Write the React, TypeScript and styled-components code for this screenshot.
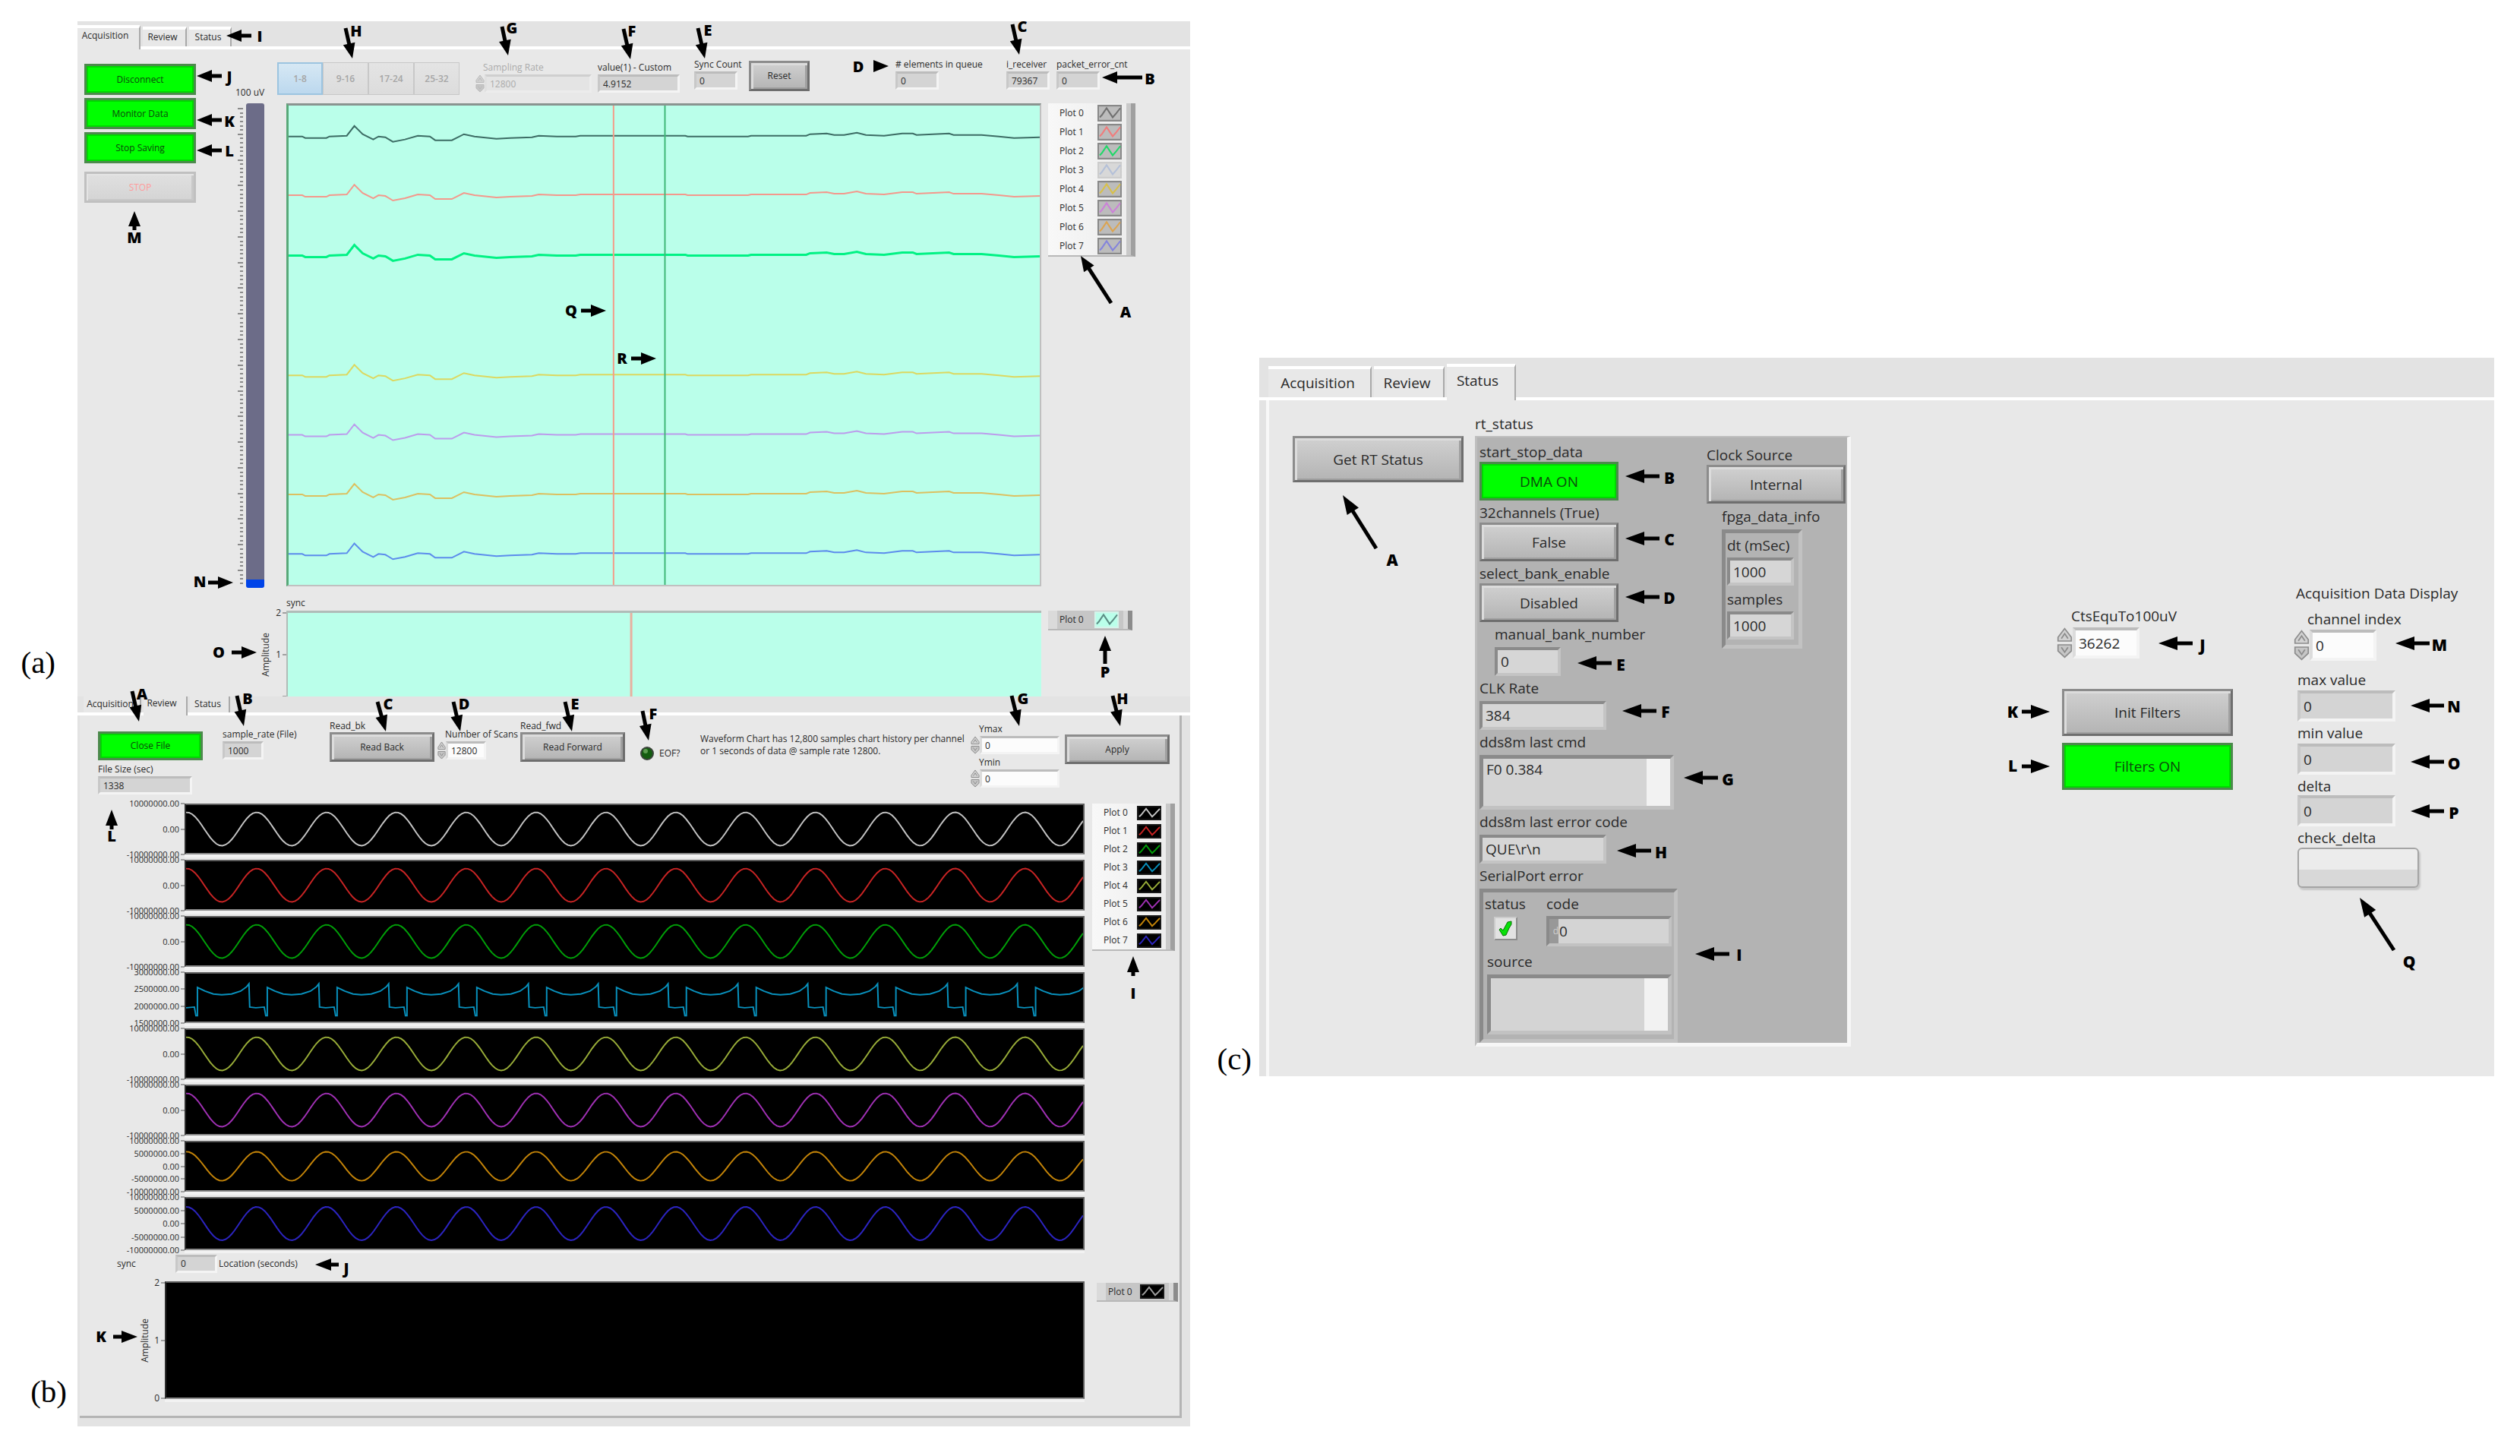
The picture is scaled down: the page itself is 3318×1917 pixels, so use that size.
import React, { useId } from "react";
import styled, { createGlobalStyle, css } from "styled-components";

const GlobalStyle = createGlobalStyle`
  *, *::before, *::after { box-sizing: border-box; }
  body { margin: 0; background: #ffffff; color: #2a2a2a; font-family: "Open Sans", "Noto Sans", sans-serif; }
  button, input, textarea { font: inherit; color: inherit; margin: 0; }
`;

/* ---------- figure layout ---------- */

const Page = styled.main`
  display: grid;
  grid-template-columns: minmax(0, 1567fr) minmax(0, 1717fr);
  padding: 28px 34px 28px 0;
`;

const LeftFigures = styled.div`
  display: grid;
  grid-template-columns: 102px minmax(0, 1fr);
  align-content: start;
`;

const SideFigure = styled.div`
  display: grid;
  grid-template-columns: 91px minmax(0, 1fr);
  align-self: start;
  padding-top: 443px;
`;

const Caption = styled.p<{ $right: number; $bottom: number }>`
  margin: 0;
  align-self: end;
  text-align: right;
  padding-right: ${(p) => p.$right}px;
  padding-bottom: ${(p) => p.$bottom}px;
  font-family: "Liberation Serif", serif;
  font-size: 41px;
  line-height: 44px;
  color: #000000;
`;

const Panel = styled.section<{ $size: number }>`
  position: relative;
  display: flex;
  flex-direction: column;
  min-width: 0;
  background: #e3e3e3;
  font-size: ${(p) => p.$size}px;
  line-height: ${(p) => (p.$size > 14 ? 24 : 16)}px;
`;

/* ---------- tabs ---------- */

const TabStrip = styled.div<{ $height: number; $indent: number }>`
  display: flex;
  align-items: flex-end;
  gap: 3px;
  height: ${(p) => p.$height}px;
  padding-left: ${(p) => p.$indent}px;
  border-bottom: 4px solid #ffffff;
  flex: none;
`;

const Tab = styled.button<{ $active?: boolean; $width: number; $height: number; $flat?: boolean }>`
  width: ${(p) => p.$width}px;
  height: ${(p) => p.$height}px;
  padding: 0 4px 2px 0;
  border: 0;
  border-top: ${(p) => (p.$flat ? 0 : 4)}px solid #ffffff;
  border-right: 2px solid #a9a9a9;
  background: #e8e8e8;
  text-align: center;
  white-space: nowrap;
  ${(p) =>
    p.$active &&
    css`
      margin-bottom: -4px;
      padding: 0 8px 8px 0;
    `}
`;

/* ---------- controls ---------- */

type Tone = "green" | "grey" | "disabled";

const tones: Record<Tone, ReturnType<typeof css>> = {
  green: css`
    background: #00ff00;
    border-color: #4c8a4c;
    box-shadow: inset 0 0 0 2px #00d800;
    color: #0c4a0c;
  `,
  grey: css`
    background: linear-gradient(#d0d0d0, #b4b4b4);
    border-color: #8c8c8c #6e6e6e #6e6e6e #8c8c8c;
    box-shadow: inset 3px 3px 0 #dcdcdc, inset -3px -2px 0 #a0a0a0;
    color: #2a2a2a;
  `,
  disabled: css`
    background: linear-gradient(#e0e0e0, #d4d4d4);
    border-color: #c0c0c0;
    box-shadow: inset 2px 2px 0 #e4e4e4, inset -3px -2px 0 #c8c8c8;
    color: #ff9c9c;
  `,
};

const PushButton = styled.button<{ $tone: Tone; $width: number; $height: number }>`
  width: ${(p) => p.$width}px;
  height: ${(p) => p.$height}px;
  padding: 0;
  border: 3px solid;
  white-space: nowrap;
  ${(p) => tones[p.$tone]}
`;

const CheckDelta = styled.button`
  width: 160px;
  height: 53px;
  border: 2px solid #a4a4a4;
  border-radius: 6px;
  background: linear-gradient(#ececec 55%, #d8d8d8 56%);
  box-shadow: 2px 3px 2px #c8c8c8;
`;

const FieldBox = styled.div<{ $gap: number; $indent: number; $faint: boolean }>`
  display: flex;
  flex-direction: column;
  align-items: flex-start;
  gap: ${(p) => p.$gap}px;
  label {
    white-space: nowrap;
    padding-left: ${(p) => p.$indent}px;
    ${(p) => p.$faint && "color: #ababab;"}
  }
`;

const FieldRow = styled.div<{ $width: number }>`
  display: flex;
  width: ${(p) => p.$width}px;
`;

type BoxLook = "indicator" | "control" | "disabled" | "sunken";

const looks: Record<BoxLook, ReturnType<typeof css>> = {
  indicator: css`
    background: #d4d4d4;
    border-color: #bcbcbc #f4f4f4 #f4f4f4 #c8c8c8;
  `,
  control: css`
    background: #fcfcfc;
    border-color: #bcbcbc #f4f4f4 #f4f4f4 #dcdcdc;
  `,
  disabled: css`
    background: #e4e4e4;
    border-color: #cfcfcf #ececec #ececec #e0e0e0;
    color: #ababab;
  `,
  sunken: css`
    background: #d6d6d6;
    border-color: #8a8a8a #c4c4c4 #c4c4c4 #8a8a8a;
  `,
};

const ValueBox = styled.input<{ $look: BoxLook; $height: number }>`
  flex: 1;
  min-width: 0;
  height: ${(p) => p.$height}px;
  padding: 0 0 0 4px;
  border: ${(p) => (p.$height > 30 ? 4 : 3)}px solid;
  border-radius: 0;
  ${(p) => looks[p.$look]}
`;

const SpinIcon = styled.svg<{ $width: number; $height: number }>`
  flex: none;
  width: ${(p) => p.$width}px;
  height: ${(p) => p.$height}px;
`;

function Spinner({ width, height, faint }: { width: number; height: number; faint?: boolean }) {
  const stroke = faint ? "#b8b8b8" : "#8c8c8c";
  return (
    <SpinIcon $width={width} $height={height} viewBox="0 0 12 25" preserveAspectRatio="none" aria-hidden="true">
      <path d="M6 1 L11 8 V11 H1 V8 Z" fill="#d2d2d2" stroke={stroke} strokeWidth="1" />
      <path d="M3.500 9 L6 5 L8.500 9" fill="none" stroke={stroke} strokeWidth="1" />
      <path d="M1 14 H11 V19 L6 24 L1 19 Z" fill="#c6c6c6" stroke={stroke} strokeWidth="1" />
      <path d="M3.500 16 L6 20 L8.500 16" fill="none" stroke={stroke} strokeWidth="1" />
    </SpinIcon>
  );
}

interface FieldProps {
  label: string;
  value: string;
  width: number;
  height?: number;
  look?: BoxLook;
  gap?: number;
  spin?: number;
  indent?: number;
}

function Field({ label, value, width, height = 24, look = "indicator", gap = 1, spin = 0, indent = 0 }: FieldProps) {
  const id = useId();
  return (
    <FieldBox $gap={gap} $indent={indent} $faint={look === "disabled"}>
      <label htmlFor={id}>{label}</label>
      <FieldRow $width={width}>
        {spin > 0 && <Spinner width={spin} height={height} faint={look === "disabled"} />}
        <ValueBox id={id} $look={look} $height={height} defaultValue={value} readOnly={look !== "control"} />
      </FieldRow>
    </FieldBox>
  );
}

const Cell = styled.div<{ $top?: number }>`
  display: flex;
  flex-direction: column;
  align-items: flex-start;
  gap: 4px;
  padding-top: ${(p) => p.$top ?? 0}px;
  white-space: nowrap;
  min-width: 0;
`;

const Stack = styled.div<{ $gap: number; $top?: number; $left?: number }>`
  display: flex;
  flex-direction: column;
  align-items: flex-start;
  gap: ${(p) => p.$gap}px;
  padding: ${(p) => p.$top ?? 0}px 0 0 ${(p) => p.$left ?? 0}px;
  white-space: nowrap;
`;

function Labelled({ id, label, gap, children }: { id: string; label: string; gap: number; children: React.ReactNode }) {
  return (
    <Stack $gap={gap}>
      <label htmlFor={id}>{label}</label>
      {children}
    </Stack>
  );
}

/* ---------- plot legends ---------- */

const LegendList = styled.ul<{ $row: number; $swatchHeight: number; $width: number }>`
  list-style: none;
  margin: 0;
  padding: 0 12px 0 15px;
  width: ${(p) => p.$width}px;
  background: linear-gradient(90deg, #f8f8f8, #ececec);
  border-right: 6px solid #a0a0a0;
  border-bottom: 2px solid #b8b8b8;
  box-shadow: inset -6px 0 0 #c8c8c8;
  li {
    display: flex;
    align-items: center;
    justify-content: space-between;
    height: ${(p) => p.$row}px;
  }
  svg {
    display: block;
    width: 32px;
    height: ${(p) => p.$swatchHeight}px;
  }
`;

const LegendBar = styled(LegendList)`
  background: #c6c6c6;
  border-right-color: #8c8c8c;
  box-shadow: inset -6px 0 0 #d8d8d8, inset 12px 0 0 #dadada;
`;

function Swatch({ color, back, edge }: { color: string; back: string; edge: string }) {
  return (
    <svg viewBox="0 0 32 20" preserveAspectRatio="none" aria-hidden="true">
      <rect x="1" y="1" width="30" height="18" fill={back} stroke={edge} strokeWidth="2" />
      <polyline points="3,15 6,12 12,4 20,15 24,11 30,4" fill="none" stroke={color} strokeWidth="2" />
    </svg>
  );
}

/* ---------- callouts ---------- */

type Mark = [letter: string, lx: number, ly: number, tipX: number, tipY: number, tailX: number, tailY: number];

const Overlay = styled.div`
  position: absolute;
  inset: 0;
  pointer-events: none;
`;

const Letter = styled.span<{ $size: number }>`
  position: absolute;
  transform: translate(-50%, -50%);
  font-size: ${(p) => p.$size}px;
  line-height: 24px;
  font-weight: 800;
  color: #000000;
`;

const ArrowSvg = styled.svg`
  position: absolute;
  width: 1px;
  height: 1px;
  overflow: visible;
`;

interface CalloutsProps {
  marks: Mark[];
  origin: [number, number];
  size: [number, number];
  head?: number;
  half?: number;
  font?: number;
}

function Callouts({ marks, origin, size, head = 20, half = 8, font = 20 }: CalloutsProps) {
  const at = (x: number, y: number) => ({
    left: `${((x - origin[0]) / size[0]) * 100}%`,
    top: `${((y - origin[1]) / size[1]) * 100}%`,
  });
  return (
    <Overlay>
      {marks.map(([letter, lx, ly, tipX, tipY, tailX, tailY]) => {
        const dx = tailX - tipX;
        const dy = tailY - tipY;
        const length = Math.hypot(dx, dy);
        const angle = (Math.atan2(dy, dx) * 180) / Math.PI;
        return (
          <React.Fragment key={letter}>
            <ArrowSvg style={at(tipX, tipY)} aria-hidden="true">
              <g transform={`rotate(${angle})`}>
                <polygon points={`0,0 ${head},${-half} ${head},${half}`} />
                <line x1={head - 2} y1="0" x2={Math.max(length, head)} y2="0" stroke="#000000" strokeWidth="5" />
              </g>
            </ArrowSvg>
            <Letter $size={font} style={at(lx, ly)}>
              {letter}
            </Letter>
          </React.Fragment>
        );
      })}
    </Overlay>
  );
}

/* ---------- (a) acquisition ---------- */

const AcqBody = styled.div`
  display: grid;
  grid-template-columns: 208px 67px minmax(0, 1fr) 196px;
  grid-template-rows: 71px 636px 145px;
  background: #e8e8e8;
`;

const AcqButtons = styled.div`
  grid-row: 1 / 3;
  display: flex;
  flex-direction: column;
  gap: 4px;
  padding: 19px 0 0 9px;
`;

const StopSlot = styled.div`
  padding-top: 7px;
`;

const AcqToolbar = styled.div`
  grid-column: 2 / 5;
  display: grid;
  grid-template-columns: 55px 261px 161px 127px 72px minmax(90px, 1fr) 146px 66px 176px;
  align-items: start;
  padding-top: 12px;
`;

const BankGroup = styled.div`
  display: grid;
  grid-template-columns: repeat(4, 60px);
  height: 43px;
  border: 2px solid #cfcfcf;
  border-width: 2px 0 2px 0;
`;

const BankButton = styled.button<{ $on?: boolean }>`
  margin: -2px 0;
  padding: 0;
  border: 1px solid #c8c8c8;
  background: linear-gradient(#e4e4e4, #dcdcdc);
  color: #a6a6a6;
  font-weight: 600;
  ${(p) =>
    p.$on &&
    css`
      border: 2px solid #9cc4e0;
      background: linear-gradient(#d6e8f4, #bcd8ee);
    `}
`;

const MeterColumn = styled.div`
  display: flex;
  gap: 3px;
  padding-left: 3px;
  height: 638px;
`;

const TickScale = styled.svg`
  width: 8px;
  height: 638px;
`;

const MeterBar = styled.div`
  width: 24px;
  border-radius: 3px;
  overflow: hidden;
  background: linear-gradient(#6c6c88 0 627px, #0044e8 627px);
`;

const MintChart = styled.svg`
  display: block;
  width: 100%;
  height: 636px;
  background: #baffea;
  border: 2px solid #c0c0c0;
  border-top: 3px solid #8a9490;
  border-left: 3px solid #58a878;
`;

const LegendColumn = styled.div<{ $left: number; $top: number }>`
  padding: ${(p) => p.$top}px 0 0 ${(p) => p.$left}px;
`;

const AxisColumn = styled.div<{ $top: number; $height: number; $gap: number }>`
  display: flex;
  justify-content: flex-end;
  align-items: center;
  gap: ${(p) => p.$gap}px;
  margin-top: ${(p) => p.$top}px;
  height: ${(p) => p.$height}px;
`;

const VerticalText = styled.span`
  writing-mode: vertical-rl;
  transform: rotate(180deg);
`;

const Scale = styled.div`
  align-self: stretch;
  display: flex;
  flex-direction: column;
  justify-content: space-between;
  align-items: flex-end;
  span {
    display: flex;
    align-items: center;
    gap: 2px;
    height: 0;
    line-height: 0;
  }
  span::after {
    content: "";
    width: 5px;
    height: 2px;
    background: #a0a0a0;
  }
`;

const SyncArea = styled.div`
  padding-top: 14px;
  overflow: hidden;
`;

const SyncChart = styled.svg`
  display: block;
  width: 100%;
  height: 113px;
  margin-top: 2px;
  background: #baffea;
  border-top: 3px solid #b0bcb8;
  border-left: 2px solid #b0bcb8;
`;

const tracePoints: [number, number][] = [
  [0, -1], [18, -1], [22, 1], [50, 1], [54, -1], [77, -2], [87, -15], [98, -4], [112, 3], [119, -1], [128, 0], [138, 6],
  [154, 3], [171, -2], [187, -1], [194, 4], [216, 4], [232, -4], [246, -1], [275, 2], [293, 1], [322, 0], [331, -2],
  [355, -1], [380, -1], [386, -2], [453, -2], [525, -2], [528, -1], [608, -1], [612, -2], [685, -2], [690, -4], [712, -5],
  [722, -3], [735, -3], [752, -6], [764, -3], [788, -2], [812, -5], [826, -5], [831, -3], [874, -5], [880, -3],
  [917, -3], [940, -1], [960, 1], [994, 0],
];

const traces = [
  { y: 42, color: "#3c6c64", width: 2 },
  { y: 120, color: "#f4988c", width: 2 },
  { y: 200, color: "#00f284", width: 3 },
  { y: 359, color: "#dcd860", width: 2 },
  { y: 438, color: "#bc9cec", width: 2 },
  { y: 517, color: "#dcc060", width: 2 },
  { y: 596, color: "#5c8cec", width: 2 },
];

const acqLegend = ["#707070", "#f07c7c", "#20d868", "#b4c0d8", "#d8c048", "#cc80d8", "#dca450", "#8484dc"];

const marksA: Mark[] = [
  ["I", 342, 48, 298, 47, 331, 47],
  ["H", 469, 41, 464, 77, 455, 37],
  ["G", 674, 37, 669, 73, 661, 35],
  ["F", 832, 41, 830, 78, 821, 38],
  ["E", 932, 40, 928, 77, 919, 37],
  ["D", 1130, 88, 1170, 87, 1150, 87],
  ["C", 1346, 35, 1342, 72, 1333, 32],
  ["B", 1514, 104, 1451, 102, 1504, 102],
  ["A", 1482, 411, 1423, 337, 1463, 399],
  ["J", 302, 101, 259, 100, 292, 100],
  ["K", 302, 160, 259, 158, 292, 158],
  ["L", 302, 199, 259, 198, 292, 198],
  ["M", 177, 313, 177, 278, 177, 303],
  ["N", 263, 766, 307, 767, 274, 767],
  ["O", 288, 859, 338, 859, 305, 859],
  ["P", 1455, 885, 1455, 837, 1455, 874],
  ["Q", 752, 409, 798, 409, 765, 409],
  ["R", 819, 472, 864, 472, 831, 472],
];

function AcquisitionPanel() {
  const ticks = Array.from({ length: 112 }, (_, i) => i);
  return (
    <Panel $size={12}>
      <TabStrip role="tablist" $height={37} $indent={0}>
        <Tab role="tab" aria-selected $active $width={83} $height={32}>Acquisition</Tab>
        <Tab role="tab" $width={58} $height={26}>Review</Tab>
        <Tab role="tab" $width={56} $height={26}>Status</Tab>
      </TabStrip>
      <AcqBody>
        <AcqButtons>
          <PushButton $tone="green" $width={147} $height={41}>Disconnect</PushButton>
          <PushButton $tone="green" $width={147} $height={41}>Monitor Data</PushButton>
          <PushButton $tone="green" $width={147} $height={41}>Stop Saving</PushButton>
          <StopSlot>
            <PushButton $tone="disabled" $width={147} $height={41}>STOP</PushButton>
          </StopSlot>
        </AcqButtons>
        <AcqToolbar>
          <Cell $top={37} id="uv-label">100 uV</Cell>
          <Cell $top={5}>
            <BankGroup>
              <BankButton $on>1-8</BankButton>
              <BankButton>9-16</BankButton>
              <BankButton>17-24</BankButton>
              <BankButton>25-32</BankButton>
            </BankGroup>
          </Cell>
          <Cell $top={4}>
            <Field label="Sampling Rate" value="12800" width={153} look="disabled" spin={12} indent={10} />
          </Cell>
          <Cell $top={4}><Field label="value(1) - Custom" value="4.9152" width={108} /></Cell>
          <Cell><Field label="Sync Count" value="0" width={57} /></Cell>
          <Cell $top={3}><PushButton $tone="grey" $width={80} $height={40}>Reset</PushButton></Cell>
          <Cell><Field label="# elements in queue" value="0" width={57} /></Cell>
          <Cell><Field label="i_receiver" value="79367" width={57} /></Cell>
          <Cell><Field label="packet_error_cnt" value="0" width={57} /></Cell>
        </AcqToolbar>
        <MeterColumn>
          <TickScale aria-hidden="true">
            {ticks.map((i) => (
              <rect key={i} x={i % 6 === 0 ? 0 : 3} y={6 + Math.round(i * 5.63)} width={i % 6 === 0 ? 7 : 4} height="2" fill="#8a8a8a" />
            ))}
          </TickScale>
          <MeterBar role="meter" aria-labelledby="uv-label" aria-valuenow={2} aria-valuemin={0} aria-valuemax={100} />
        </MeterColumn>
        <MintChart viewBox="0 0 994 636" preserveAspectRatio="none" role="img" aria-label="Channel traces">
          {traces.map((t) => (
            <polyline
              key={t.y}
              points={tracePoints.map(([x, dy]) => `${x},${t.y + dy}`).join(" ")}
              fill="none"
              stroke={t.color}
              strokeWidth={t.width}
            />
          ))}
          <line x1="430" x2="430" y1="0" y2="636" stroke="#f49c88" strokeWidth="2" />
          <line x1="498" x2="498" y1="0" y2="636" stroke="#40b878" strokeWidth="2" />
        </MintChart>
        <LegendColumn $left={9} $top={0}>
          <LegendList $row={25} $swatchHeight={22} $width={115}>
            {acqLegend.map((color, i) => (
              <li key={color}>
                Plot {i}
                <Swatch color={color} back={i === 3 ? "#d8d8d8" : "#bcbcbc"} edge={i === 3 ? "#cccccc" : "#888888"} />
              </li>
            ))}
          </LegendList>
        </LegendColumn>
        <div />
        <AxisColumn $top={35} $height={110} $gap={5}>
          <VerticalText>Amplitude</VerticalText>
          <Scale><span>2</span><span>1</span><span /></Scale>
        </AxisColumn>
        <SyncArea>
          sync
          <SyncChart viewBox="0 0 994 113" preserveAspectRatio="none" role="img" aria-label="Sync trace">
            <line x1="453" x2="453" y1="0" y2="113" stroke="#e8b0a0" strokeWidth="3" />
          </SyncChart>
        </SyncArea>
        <LegendColumn $left={9} $top={32}>
          <LegendBar $row={24} $swatchHeight={22} $width={111}>
            <li>Plot 0<Swatch color="#5c8c84" back="#baffea" edge="#d4f4ea" /></li>
          </LegendBar>
        </LegendColumn>
      </AcqBody>
      <Callouts marks={marksA} origin={[102, 28]} size={[1465, 889]} />
    </Panel>
  );
}

/* ---------- (b) review ---------- */

const ReviewBody = styled.div`
  margin: 0 11px 11px 3px;
  padding-bottom: 22px;
  background: #e8e8e8;
  border: 3px solid #b4b4b4;
  border-width: 0 3px 3px 0;
`;

const ReviewToolbar = styled.div`
  display: grid;
  grid-template-columns: 164px 141px 142px 109px 158px 79px minmax(0, 1fr) 124px 151px;
  padding-left: 24px;
  height: 116px;
`;

const EofRow = styled.div`
  display: flex;
  align-items: center;
  gap: 7px;
  svg { width: 18px; height: 18px; }
`;

const Note = styled.p`
  margin: 0;
`;

const ChannelSection = styled.div`
  display: grid;
  grid-template-columns: minmax(0, 1fr) 125px;
`;

const ChannelStack = styled.div`
  display: grid;
  grid-template-rows: repeat(7, 67px) 70px;
  row-gap: 7px;
`;

const Channel = styled.div`
  display: grid;
  grid-template-columns: 138px minmax(0, 1fr);
  font-size: 11px;
`;

const BlackChart = styled.svg`
  display: block;
  width: 100%;
  height: 100%;
  min-height: 0;
  background: #000000;
  border: 2px solid #5c5c5c;
  border-bottom-color: #8c8c8c;
  border-left-color: #2c2c2c;
  box-shadow: 0 4px 0 #f2f2f2;
`;

const LocationRow = styled.div`
  display: grid;
  grid-template-columns: 75px 55px 1fr;
  column-gap: 2px;
  align-items: center;
  height: 41px;
  padding: 0 0 6px 49px;
`;

const ReviewSync = styled.div`
  display: grid;
  grid-template-columns: 112px minmax(0, 1fr) 125px;
  grid-template-rows: 155px;
`;

const wave = (amp: number, mid: number) => {
  const pts: string[] = [];
  for (let x = 0; x <= 1184; x += 4) {
    pts.push(`${x},${(mid - amp * Math.cos((2 * Math.PI * (x - 1)) / 92.2)).toFixed(1)}`);
  }
  return pts.join(" ");
};

const stepWave = () => {
  const pts: string[] = ["0,47"];
  const shape: [number, number][] = [
    [11, 46], [13, 58], [15, 58], [15, 19], [25, 24], [36, 28], [47, 29], [60, 28], [72, 24], [80, 18], [83, 14],
    [84, 46], [92, 47],
  ];
  for (let i = 0; i < 13; i++) {
    shape.forEach(([x, y]) => pts.push(`${(i * 92.2 + x).toFixed(1)},${y}`));
  }
  return pts.join(" ");
};

const wide = ["10000000.00", "0.00", "-10000000.00"];
const fine = ["10000000.00", "5000000.00", "0.00", "-5000000.00", "-10000000.00"];

const channels = [
  { color: "#c4c4c4", scale: wide, points: wave(23, 33) },
  { color: "#c82424", scale: wide, points: wave(23, 33) },
  { color: "#00a008", scale: wide, points: wave(23, 33) },
  { color: "#0890bc", scale: ["3000000.00", "2500000.00", "2000000.00", "1500000.00"], points: stepWave() },
  { color: "#98ac38", scale: wide, points: wave(23, 33) },
  { color: "#a030b4", scale: wide, points: wave(23, 33) },
  { color: "#c48408", scale: fine, points: wave(20, 33) },
  { color: "#2c24c0", scale: fine, points: wave(22, 33) },
];

const marksB: Mark[] = [
  ["A", 187, 914, 183, 950, 174, 910],
  ["B", 326, 920, 321, 956, 312, 916],
  ["C", 511, 927, 508, 963, 497, 924],
  ["D", 611, 927, 606, 963, 597, 924],
  ["E", 757, 927, 753, 963, 744, 924],
  ["F", 860, 940, 854, 975, 846, 936],
  ["G", 1347, 920, 1342, 956, 1332, 916],
  ["H", 1478, 920, 1475, 956, 1465, 916],
  ["I", 1492, 1308, 1492, 1259, 1492, 1285],
  ["J", 456, 1671, 415, 1666, 446, 1666],
  ["K", 133, 1761, 181, 1761, 149, 1761],
  ["L", 147, 1101, 147, 1066, 147, 1092],
];

function ReviewPanel() {
  return (
    <Panel $size={12}>
      <TabStrip role="tablist" $height={25} $indent={8}>
        <Tab role="tab" $flat $width={76} $height={21}>Acquisition</Tab>
        <Tab role="tab" aria-selected $active $flat $width={58} $height={25}>Review</Tab>
        <Tab role="tab" $flat $width={53} $height={21}>Status</Tab>
      </TabStrip>
      <ReviewBody>
        <ReviewToolbar>
          <Cell $top={21}>
            <PushButton $tone="green" $width={138} $height={38}>Close File</PushButton>
            <Field label="File Size (sec)" value="1338" width={124} />
          </Cell>
          <Cell $top={17}><Field label="sample_rate (File)" value="1000" width={54} /></Cell>
          <Cell $top={6}>
            <Labelled id="read-back" label="Read_bk" gap={0}>
              <PushButton id="read-back" $tone="grey" $width={138} $height={39}>Read Back</PushButton>
            </Labelled>
          </Cell>
          <Cell $top={17}>
            <Field label="Number of Scans" value="12800" width={64} look="control" spin={11} indent={10} />
          </Cell>
          <Cell $top={6}>
            <Labelled id="read-forward" label="Read_fwd" gap={0}>
              <PushButton id="read-forward" $tone="grey" $width={138} $height={39}>Read Forward</PushButton>
            </Labelled>
          </Cell>
          <Cell $top={41}>
            <EofRow>
              <svg viewBox="0 0 18 18" aria-hidden="true">
                <circle cx="9" cy="9" r="8" fill="#145c10" stroke="#3c443c" strokeWidth="2" />
                <circle cx="7" cy="6" r="3" fill="#5c9c50" />
              </svg>
              EOF?
            </EofRow>
          </Cell>
          <Cell $top={23}>
            <Note>
              Waveform Chart has 12,800 samples chart history per channel
              <br />
              or 1 seconds of data @ sample rate 12800.
            </Note>
          </Cell>
          <Cell $top={10}>
            <Stack $gap={3}>
              <Field label="Ymax" value="0" width={117} look="control" spin={12} indent={11} />
              <Field label="Ymin" value="0" width={117} look="control" spin={12} indent={11} />
            </Stack>
          </Cell>
          <Cell $top={25}><PushButton $tone="grey" $width={138} $height={39}>Apply</PushButton></Cell>
        </ReviewToolbar>
        <ChannelSection>
          <ChannelStack>
            {channels.map((c) => (
              <Channel key={c.color}>
                <Scale>
                  {c.scale.map((s) => (
                    <span key={s}>{s}</span>
                  ))}
                </Scale>
                <BlackChart viewBox="0 0 1184 66" preserveAspectRatio="none" role="img" aria-label="Channel history">
                  <polyline points={c.points} fill="none" stroke={c.color} strokeWidth="2" />
                </BlackChart>
              </Channel>
            ))}
          </ChannelStack>
          <LegendColumn $left={10} $top={0}>
            <LegendList $row={24} $swatchHeight={19} $width={109}>
              {channels.map((c, i) => (
                <li key={c.color}>
                  Plot {i}
                  <Swatch color={c.color} back="#000000" edge="#181818" />
                </li>
              ))}
            </LegendList>
          </LegendColumn>
        </ChannelSection>
        <LocationRow>
          <span>sync</span>
          <ValueBox id="location" $look="indicator" $height={24} defaultValue="0" readOnly />
          <label htmlFor="location">Location (seconds)</label>
        </LocationRow>
        <ReviewSync>
          <AxisColumn $top={2} $height={152} $gap={4}>
            <VerticalText>Amplitude</VerticalText>
            <Scale><span>2</span><span>1</span><span>0</span></Scale>
          </AxisColumn>
          <BlackChart role="img" aria-label="Sync history" />
          <LegendColumn $left={16} $top={2}>
            <LegendBar $row={23} $swatchHeight={19} $width={107}>
              <li>Plot 0<Swatch color="#a0a0a0" back="#000000" edge="#181818" /></li>
            </LegendBar>
          </LegendColumn>
        </ReviewSync>
      </ReviewBody>
      <Callouts marks={marksB} origin={[102, 917]} size={[1465, 962]} head={21} />
    </Panel>
  );
}

/* ---------- (c) status ---------- */

const StatusBody = styled.div`
  display: grid;
  grid-template-columns: 271px 495px minmax(0, 1fr) 310px 266px;
  margin-left: 9px;
  min-height: 890px;
  background: #e8e8e8;
  border-left: 4px solid #f8f8f8;
`;

const RtButtonArea = styled.div`
  padding: 47px 0 0 31px;
`;

const RtStatus = styled.div`
  display: flex;
  flex-direction: column;
  gap: 4px;
  padding-top: 19px;
`;

const Cluster = styled.div`
  display: grid;
  grid-template-columns: 299px 1fr;
  height: 804px;
  padding: 7px 0 0 3px;
  background: #b3b3b3;
  border: 3px solid #bebebe;
  border-width: 2px 5px 5px 3px;
  border-right-color: #f6f6f6;
  border-bottom-color: #f6f6f6;
`;

const SunkenGroup = styled.div<{ $width: number; $height: number }>`
  width: ${(p) => p.$width}px;
  height: ${(p) => p.$height}px;
  border: 5px solid;
  border-color: #8a8a8a #c2c2c2 #c2c2c2 #8a8a8a;
`;

const TextRow = styled.div<{ $width: number; $height: number }>`
  display: flex;
  width: ${(p) => p.$width}px;
  height: ${(p) => p.$height}px;
  border: 5px solid;
  border-color: #8a8a8a #c2c2c2 #c2c2c2 #8a8a8a;
  background: #d4d4d4;
  textarea {
    flex: 1;
    min-width: 0;
    padding: 2px 4px;
    border: 0;
    background: transparent;
    resize: none;
    overflow: hidden;
  }
`;

const ScrollTrack = styled.span`
  width: 31px;
  background: #f2f2f2;
`;

const ErrorGrid = styled.div`
  display: grid;
  grid-template-columns: 81px 165px;
  padding: 3px 0 0 2px;
`;

const CheckWrap = styled.span`
  display: grid;
  margin-left: 12px;
  input, svg { grid-area: 1 / 1; }
  input {
    appearance: none;
    width: 31px;
    height: 31px;
    background: #e2e2e2;
    border: 2px solid;
    border-color: #cccccc #8c8c8c #8c8c8c #cccccc;
  }
  svg { width: 31px; height: 31px; pointer-events: none; }
`;

const CodeRow = styled.div`
  display: flex;
  width: 165px;
  height: 40px;
  border: 4px solid;
  border-color: #8a8a8a #c2c2c2 #c2c2c2 #8a8a8a;
  background: #d4d4d4;
  input {
    flex: 1;
    min-width: 0;
    padding: 0 0 0 1px;
    border: 0;
    background: transparent;
  }
`;

const Radix = styled.span`
  width: 12px;
  background: #989898;
  color: #d0d0d0;
  font-size: 12px;
  text-align: right;
  line-height: 32px;
`;

const Indent = styled.div<{ $left: number }>`
  padding-left: ${(p) => p.$left}px;
`;

const marksC: Mark[] = [
  ["A", 1833, 737, 1768, 652, 1812, 722],
  ["B", 2198, 629, 2140, 627, 2185, 627],
  ["C", 2198, 710, 2140, 709, 2185, 709],
  ["D", 2198, 787, 2140, 786, 2185, 786],
  ["E", 2134, 875, 2077, 873, 2122, 873],
  ["F", 2193, 937, 2136, 936, 2181, 936],
  ["G", 2275, 1025, 2217, 1023, 2262, 1023],
  ["H", 2187, 1121, 2129, 1119, 2174, 1119],
  ["I", 2290, 1256, 2232, 1255, 2277, 1255],
  ["J", 2900, 849, 2842, 847, 2887, 847],
  ["K", 2650, 937, 2699, 937, 2662, 937],
  ["L", 2650, 1007, 2699, 1008, 2662, 1008],
  ["M", 3212, 849, 3154, 847, 3199, 847],
  ["N", 3231, 930, 3174, 929, 3218, 929],
  ["O", 3231, 1004, 3174, 1002, 3218, 1002],
  ["P", 3231, 1069, 3174, 1067, 3218, 1067],
  ["Q", 3172, 1265, 3107, 1181, 3152, 1250],
];

function StatusPanel() {
  return (
    <Panel $size={19}>
      <TabStrip role="tablist" $height={56} $indent={12}>
        <Tab role="tab" $width={136} $height={41}>Acquisition</Tab>
        <Tab role="tab" $width={93} $height={41}>Review</Tab>
        <Tab role="tab" aria-selected $active $width={91} $height={48}>Status</Tab>
      </TabStrip>
      <StatusBody>
        <RtButtonArea>
          <PushButton $tone="grey" $width={225} $height={61}>Get RT Status</PushButton>
        </RtButtonArea>
        <RtStatus>
          <span>rt_status</span>
          <Cluster>
            <Stack $gap={4}>
              <Labelled id="dma" label="start_stop_data" gap={1}>
                <PushButton id="dma" $tone="green" $width={183} $height={51}>DMA ON</PushButton>
              </Labelled>
              <Labelled id="chan32" label="32channels (True)" gap={1}>
                <PushButton id="chan32" $tone="grey" $width={183} $height={51}>False</PushButton>
              </Labelled>
              <Labelled id="bank-enable" label="select_bank_enable" gap={1}>
                <PushButton id="bank-enable" $tone="grey" $width={183} $height={51}>Disabled</PushButton>
              </Labelled>
              <Indent $left={20}>
                <Field label="manual_bank_number" value="0" width={87} height={38} gap={5} look="sunken" />
              </Indent>
              <Field label="CLK Rate" value="384" width={167} height={38} gap={5} look="sunken" />
              <Labelled id="last-cmd" label="dds8m last cmd" gap={5}>
                <TextRow $width={256} $height={72}>
                  <textarea id="last-cmd" readOnly defaultValue="F0 0.384" />
                  <ScrollTrack />
                </TextRow>
              </Labelled>
              <Field label="dds8m last error code" value={"QUE\\r\\n"} width={167} height={38} gap={5} look="sunken" />
              <Stack $gap={5}>
                <span>SerialPort error</span>
                <SunkenGroup $width={261} $height={203}>
                  <ErrorGrid>
                    <Labelled id="err-status" label="status" gap={5}>
                      <CheckWrap>
                        <input id="err-status" type="checkbox" defaultChecked />
                        <svg viewBox="0 0 31 31" aria-hidden="true">
                          <path d="M7 17 L9 15 L12 18 L18 7 L23 6 L23 10 L20 15 L16 24 L12 25 Z" fill="#08e008" stroke="#087008" strokeWidth="1" />
                        </svg>
                      </CheckWrap>
                    </Labelled>
                    <Labelled id="err-code" label="code" gap={4}>
                      <CodeRow>
                        <Radix>d</Radix>
                        <input id="err-code" readOnly defaultValue="0" />
                      </CodeRow>
                    </Labelled>
                  </ErrorGrid>
                  <Stack $gap={5} $top={8} $left={5}>
                    <label htmlFor="err-source">source</label>
                    <TextRow $width={243} $height={79}>
                      <textarea id="err-source" readOnly defaultValue="" />
                      <ScrollTrack />
                    </TextRow>
                  </Stack>
                </SunkenGroup>
              </Stack>
            </Stack>
            <Stack $gap={5} $top={4}>
              <Labelled id="clock" label="Clock Source" gap={1}>
                <PushButton id="clock" $tone="grey" $width={183} $height={51}>Internal</PushButton>
              </Labelled>
              <Stack $gap={5} $left={20}>
                <span>fpga_data_info</span>
                <SunkenGroup $width={106} $height={157}>
                  <Stack $gap={6} $top={4} $left={2}>
                    <Field label="dt (mSec)" value="1000" width={88} height={37} gap={4} look="sunken" />
                    <Field label="samples" value="1000" width={88} height={37} gap={4} look="sunken" />
                  </Stack>
                </SunkenGroup>
              </Stack>
            </Stack>
          </Cluster>
        </RtStatus>
        <div />
        <Stack $gap={40} $top={272}>
          <Field label="CtsEquTo100uV" value="36262" width={109} height={41} gap={3} look="control" spin={21} indent={19} />
          <Stack $gap={9} $left={7}>
            <PushButton $tone="grey" $width={225} $height={62}>Init Filters</PushButton>
            <PushButton $tone="green" $width={225} $height={62}>Filters ON</PushButton>
          </Stack>
        </Stack>
        <Stack $gap={10} $top={242} $left={2}>
          <Indent $left={3}>Acquisition Data Display</Indent>
          <Field label="channel index" value="0" width={109} height={41} gap={2} look="control" spin={21} indent={18} />
          <Stack $gap={3} $top={3} $left={5}>
            <Field label="max value" value="0" width={129} height={41} gap={2} />
            <Field label="min value" value="0" width={129} height={41} gap={2} />
            <Field label="delta" value="0" width={129} height={41} gap={0} />
            <Labelled id="check-delta" label="check_delta" gap={1}>
              <CheckDelta id="check-delta" />
            </Labelled>
          </Stack>
        </Stack>
      </StatusBody>
      <Callouts marks={marksC} origin={[1658, 471]} size={[1626, 945]} head={25} half={9} font={21} />
    </Panel>
  );
}

export default function App() {
  return (
    <>
      <GlobalStyle />
      <Page>
        <LeftFigures>
          <Caption $right={29} $bottom={23}>(a)</Caption>
          <AcquisitionPanel />
          <Caption $right={14} $bottom={24}>(b)</Caption>
          <ReviewPanel />
        </LeftFigures>
        <SideFigure>
          <Caption $right={10} $bottom={1}>(c)</Caption>
          <StatusPanel />
        </SideFigure>
      </Page>
    </>
  );
}
